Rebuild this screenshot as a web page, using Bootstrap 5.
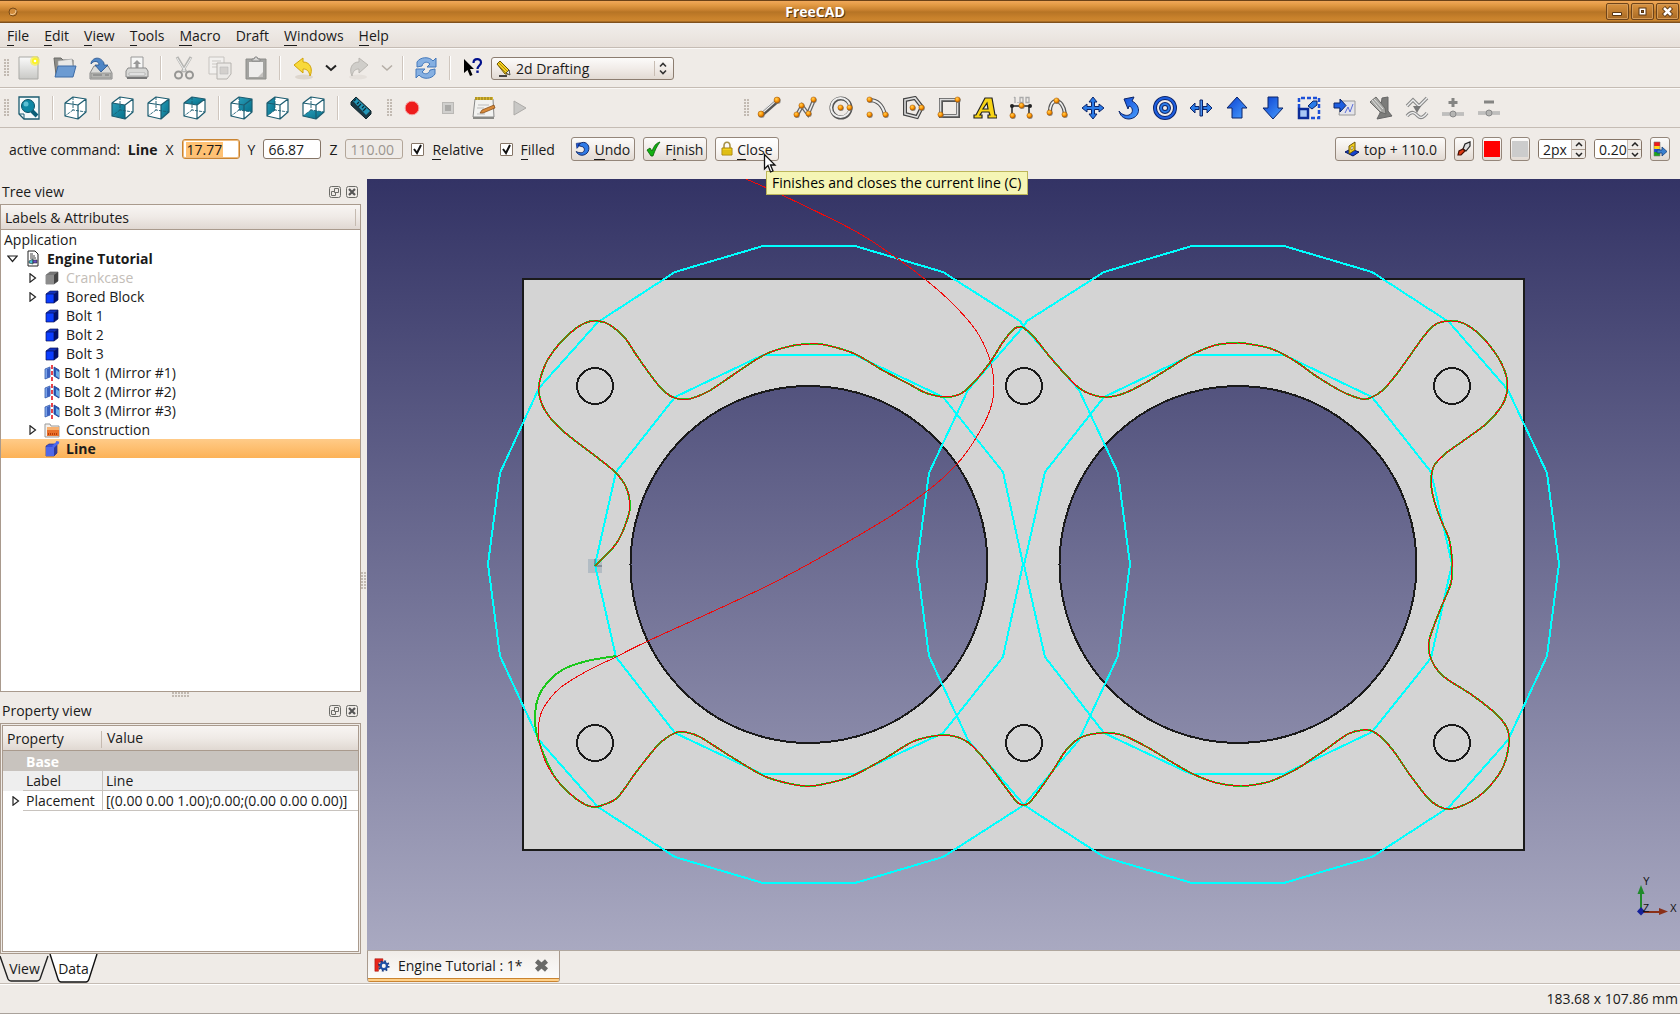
<!DOCTYPE html>
<html lang="en">
<head>
<meta charset="utf-8">
<meta name="viewport" content="width=device-width, initial-scale=1">
<title>FreeCAD</title>
<link rel="stylesheet" href="https://cdn.jsdelivr.net/npm/bootstrap@5.3.0/dist/css/bootstrap.min.css">
<style>
:root{--face:#efebe7;--edge:#a99a8d;--line:#c5bcb4;--sel:#ffc173}
body{font-family:"Open Sans","Noto Sans",sans-serif;font-size:14px;line-height:19px;color:#1a1a1a;background:var(--face);overflow:hidden}
button,input,select{font:inherit;color:inherit}
svg{display:block;flex:none}
a{color:inherit;text-decoration:none}
u{text-decoration:none;border-bottom:1px solid currentColor}
.titlebar{height:23px;background:linear-gradient(#6b4217 0,#6b4217 1px,#f0a85a 1px,#e39a43 5px,#c8812f 10px,#b67425 12px,#c9822c 18px,#cc8630 21px,#80511c 22px);color:#fff;font-weight:700;text-shadow:1px 1px 0 #5a3510}
.wm-left{width:72px}
.wm-btns{gap:2px;padding-right:1px}
.wm-btn{width:23px;height:17px;border:1px solid #6e441a;border-radius:2px;background:linear-gradient(#d9923f,#a86a24);padding:0;box-shadow:inset 0 0 0 1px #d59b57}
.menubar{height:25px;background:linear-gradient(#f1eeeb,#e7e0da);border-bottom:1px solid var(--line);gap:15px;padding:0 7px}
.toolrow{height:40px;border-bottom:1px solid var(--line);border-top:1px solid #faf8f6}
.tool{width:36px;height:36px;border:0;background:none;padding:0;display:flex;align-items:center;justify-content:center}
.tool-drop{width:20px}
.tsep{width:11px;display:flex;justify-content:center}
.tsep::before{content:"";width:2px;height:24px;background:#cfc6be;border-right:1px solid #fff}
.handle{width:5px;height:18px;margin-right:2px;background:radial-gradient(circle at 1px 1px,#c2bab2 0 1px,transparent 1px) 0 0/3px 3px}
.tools-left{flex:0 0 744px}
.taskrow{height:51px;padding:9px 10px 18px 9px}
.gbtn{height:24px;border:1px solid #94867a;border-radius:3px;background:linear-gradient(#fcfbfa,#f1ece8 50%,#e2dad3);padding:0;display:flex;align-items:center;justify-content:center}
.gbtn-hot{background:linear-gradient(#fff,#faf8f6 50%,#efe9e4)}
.gbtn-w{width:64px;gap:4px}
.gbtn-sq{width:20px}
.swatch{width:16px;height:16px}
.swatch-line{background:#f00}
.swatch-face{background:#ccc}
.entry{height:20px;border:1px solid #857567;border-radius:3px;background:#fff;padding:0 4px;min-width:0;outline:0}
.entry-num{width:58px}
.entry-hot{border:1px solid #c98432;box-shadow:inset 0 0 0 1px #eebb7e;background:linear-gradient(var(--sel),var(--sel)) 3px 2px/37px 16px no-repeat,#fff}
.entry:disabled{background:var(--face);color:#9b958f;border-color:#b3a699}
.tick{appearance:none;width:13px;height:13px;border:1px solid #857567;border-radius:1px;background:#fff url("data:image/svg+xml,%3Csvg xmlns='http://www.w3.org/2000/svg' viewBox='0 0 11 11'%3E%3Cpath d='M2 5l3 4 4-8' fill='none' stroke='%23111' stroke-width='2'/%3E%3C/svg%3E") center/11px no-repeat;margin:0;flex:none}
.spin{width:48px;height:20px;border:1px solid #857567;border-radius:3px;background:#fff;overflow:hidden}
.spin input{width:32px;border:0;padding:0 0 0 4px;background:#fff;min-width:0;outline:0}
.spin-arrows{width:14px;background:var(--face);border-left:1px solid #c7bcb2}
.spin-arrows button{height:9px;border:0;background:none;padding:0;display:flex;align-items:center;justify-content:center}
.spin-arrows button+button{border-top:1px solid #a99a8d}
.wb{position:relative;width:183px}
.wb select{appearance:none;width:100%;height:23px;border:1px solid #8c7d70;border-radius:3px;background:linear-gradient(#fcfbfa,#f1ece8 50%,#e2dad3);padding:0 20px 0 24px}
.wb-pic{position:absolute;left:5px;top:3px;pointer-events:none}
.wb-arr{position:absolute;right:0;top:4px;pointer-events:none}
.tip{position:absolute;left:766px;top:171px;height:24px;line-height:21px;padding:0 5px;background:#f5f5b5;border:1px solid #bdb65a;z-index:5;white-space:nowrap;color:#000}
.pointer{position:absolute;left:763px;top:153px;z-index:6}
.workarea,.tree-box{min-height:0}
.dock{flex:0 0 361px}
.dock-title{height:25px;padding:0 3px 0 2px;gap:5px}
.dock-title button{width:12px;height:12px;border:0;padding:0;background:none}
.head-bar{background:linear-gradient(#f8f5f3,#efeae6 50%,#e0d8d2);border-bottom:1px solid var(--edge)}
.tree-box{border:1px solid var(--edge);background:#fff}
.tree-head{height:25px;padding:0 4px}
.tree-head::after,.vbar{content:"";width:1px;height:17px;background:#c5bab0}
.tree-row{height:19px;padding-left:3px;white-space:nowrap}
.lv1{padding-left:6px}
.lv2{padding-left:27px}
.row-off{color:#c3bdb7}
.exp{width:10px;height:12px;border:0;padding:0;background:none;display:flex;align-items:center;justify-content:center}
.lv1 svg.ico{margin:0 6px 0 8px}
.lv2 .exp{width:9px;margin-right:7px}
.lv2 svg.ico{width:16px;margin-right:6px}
.lv2.mir svg.ico{margin-right:4px}
.row-sel{background:linear-gradient(#ffcb88,#fcb257)}
.split-h{height:6px;display:flex;justify-content:center;align-items:center}
.split-h i{width:18px;height:6px;background:radial-gradient(circle at 1px 1px,#c2bab2 0 1px,transparent 1px) 0 0/3px 3px}
.split-v{flex:0 0 6px;display:flex;align-items:center}
.split-v i{width:6px;height:18px;background:radial-gradient(circle at 1px 1px,#c2bab2 0 1px,transparent 1px) 0 0/3px 3px}
.prop-box{height:231px;border:1px solid var(--edge);padding:1px}
.prop-in{border:1px solid var(--edge);background:#fff}
.prop-tbl{width:100%;table-layout:fixed;border-collapse:separate;border-spacing:0}
.prop-tbl .w-exp{width:20px}
.prop-tbl .w-name{width:79px}
.prop-tbl th,.prop-tbl td{padding:0 3px;height:20px;white-space:nowrap;font-weight:400}
.prop-tbl thead th{height:25px;padding:0 4px;background:linear-gradient(#f8f5f3,#efeae6 50%,#e0d8d2);border-bottom:1px solid var(--edge)}
.prop-tbl .vbar{display:inline-block;vertical-align:middle;margin:0 5px 0 -5px}
.prop-tbl .grp{background:#c8c3be;color:#fff;font-weight:700}
.prop-tbl tbody .c2,.prop-tbl tbody .c1{border-bottom:1px solid #c8c3be}
.prop-tbl tbody .c2{border-left:1px solid #c8c3be}
.lab-row td,.lab-row th{background:#eee}
.dock-tabs{height:29px}
.dtab{position:relative;width:49px;height:29px;border:0;background:none;padding:0;display:flex;align-items:center;justify-content:center}
.dtab svg{position:absolute;left:0;top:0;z-index:0}
.dtab span{position:relative;z-index:1}
.viewcol{min-width:0}
.view3d{min-width:0;min-height:0;background:linear-gradient(#333365,#a9a9c1)}
.view3d svg{width:100%;height:100%}
.doctabs{height:33px;border-top:1px solid #b0a79e}
.doctab{width:193px;height:31px;border:1px solid var(--edge);border-top:0;border-bottom:0;border-radius:0 0 3px 3px;background:linear-gradient(#f0ece8,#fcfbfa 27px,#c98432 27px,#c98432 28px,#ffd088 28px,#ffd088 30px,#c98432 30px);padding:0 6px 3px 6px}
.statusbar{height:31px;border-top:1px solid var(--line);border-bottom:1px solid #a9a29b;box-shadow:inset 0 1px 0 #fff;padding-right:2px}
</style>
<script src="https://cdn.jsdelivr.net/npm/bootstrap@5.3.0/dist/js/bootstrap.bundle.min.js"></script>
</head>
<body class="vh-100 d-flex flex-column position-relative">
<svg width="0" height="0" class="position-absolute" aria-hidden="true">
  <defs>
    <radialGradient id="gOrb" cx=".4" cy=".35" r=".7"><stop offset="0" stop-color="#ffd35a"/><stop offset=".5" stop-color="#ff9a0a"/><stop offset="1" stop-color="#b35c00"/></radialGradient>
    <linearGradient id="gBlue" x1="0" y1="0" x2="1" y2="1"><stop offset="0" stop-color="#0a3fd0"/><stop offset="1" stop-color="#4aa0ff"/></linearGradient>
    <linearGradient id="gTeal" x1="0" y1="0" x2="1" y2="1"><stop offset="0" stop-color="#2a9cb8"/><stop offset="1" stop-color="#04708a"/></linearGradient>
    <linearGradient id="gGrey" x1="0" y1="0" x2="0" y2="1"><stop offset="0" stop-color="#fafafa"/><stop offset="1" stop-color="#c9c9c6"/></linearGradient>
    <symbol id="orb" viewBox="0 0 8 8"><circle cx="4.6" cy="4.8" r="3.2" fill="#777" opacity=".7"/><circle cx="4" cy="4" r="3" fill="url(#gOrb)" stroke="#9c5a0c" stroke-width=".5"/></symbol>
    <symbol id="wire" viewBox="0 0 24 24"><path d="M1 7l13 2v14L1 20zM1 7l8-6 13 2-8 6M22 3v13l-8 7" fill="none" stroke="#1c5c70" stroke-width="1.2" stroke-linejoin="round"/><path d="M9 1v13l13 2M9 14l-8 6" fill="none" stroke="#1c5c70" stroke-width=".9" stroke-dasharray="3 1"/></symbol>
    <symbol id="box" viewBox="0 0 16 16"><path d="M2 5h8v9H2z" fill="#0b3dff"/><path d="M2 5l4-3h8l-4 3z" fill="#1030c0"/><path d="M10 5l4-3v9l-4 3z" fill="#001070"/><path d="M2 5h8v9H2zM2 5l4-3h8v9l-4 3M10 5l4-3" fill="none" stroke="#06105a" stroke-width=".7"/></symbol>
    <symbol id="mirror" viewBox="0 0 16 16"><path d="M1 4l5-2v10l-5 2z" fill="#7ba3e8" stroke="#3458a8" stroke-width=".8"/><path d="M3 4l3-1v9l-3 1z" fill="#3c62c0"/><path d="M10 2l5 3v9l-5-3z" fill="#2a58b8" stroke="#1c3f90" stroke-width=".8"/><path d="M12 5l3 2v6l-3-2z" fill="#6fb0e8"/><path d="M8 0v4M8 6v4M8 12v4" stroke="#e8434a" stroke-width="2"/></symbol>
    <symbol id="floatw" viewBox="0 0 12 12"><rect x=".5" y=".5" width="11" height="11" rx="2" fill="none" stroke="#6c6c68"/><path d="M5.500 2.500h4v4h-4zM5 5.500H2.500v4h4V7" fill="none" stroke="#6c6c68"/></symbol>
    <symbol id="closew" viewBox="0 0 12 12"><rect x=".5" y=".5" width="11" height="11" rx="2" fill="none" stroke="#6c6c68"/><path d="M3 3l6 6M9 3l-6 6" stroke="#555" stroke-width="2.200"/></symbol>
    <symbol id="closed" viewBox="0 0 8 10"><path d="M1 .8l5.500 4.200L1 9.200z" fill="#fff" stroke="#222" stroke-width="1.200"/></symbol>
  </defs>
</svg>

<header class="titlebar d-flex align-items-center">
  <div class="wm-left ps-2"><svg width="10" height="10" viewBox="0 0 10 10"><circle cx="5" cy="5" r="4" fill="#d08a3a" stroke="#7a4b18"/><path d="M2 7a4 4 0 0 0 6-4" fill="none" stroke="#f3cf9e"/></svg></div>
  <div class="flex-fill text-center pe-5">FreeCAD</div>
  <div class="wm-btns d-flex">
    <button class="wm-btn" aria-label="Minimize"><svg width="21" height="15" viewBox="0 0 21 15"><path d="M5.500 8.500h9v3h-9z" fill="#fff" stroke="#5a3510"/></svg></button>
    <button class="wm-btn" aria-label="Maximize"><svg width="21" height="15" viewBox="0 0 21 15"><rect x="7" y="4" width="7" height="7" fill="#fff" stroke="#5a3510"/><rect x="9.500" y="6.500" width="2" height="2" fill="#8a5a20" stroke="#5a3510"/></svg></button>
    <button class="wm-btn" aria-label="Close window"><svg width="21" height="15" viewBox="0 0 21 15"><path d="M6.500 3.500l8 8M14.500 3.500l-8 8" stroke="#5a3510" stroke-width="4.500"/><path d="M7 4l7 7M14 4l-7 7" stroke="#fff" stroke-width="2.500"/></svg></button>
  </div>
</header>

<nav class="menubar d-flex align-items-center">
  <a href="#"><u>F</u>ile</a><a href="#"><u>E</u>dit</a><a href="#"><u>V</u>iew</a><a href="#"><u>T</u>ools</a><a href="#"><u>M</u>acro</a><a href="#">Draft</a><a href="#"><u>W</u>indows</a><a href="#"><u>H</u>elp</a>
</nav>

<div class="toolrow d-flex align-items-center">
  <div class="handle ms-1"></div>
  <button class="tool" aria-label="New"><svg width="24" height="24" viewBox="0 0 24 24"><path d="M2 1h19v22H2z" fill="url(#gGrey)" stroke="#a9a9a5"/><circle cx="18" cy="5" r="5" fill="#f6ee3c" opacity=".6"/><circle cx="18" cy="5" r="3" fill="#fdf41c"/><circle cx="18" cy="5" r="1.300" fill="#fff"/></svg></button>
  <button class="tool" aria-label="Open"><svg width="24" height="24" viewBox="0 0 24 24"><path d="M1 2h7l2 2h10v15H3z" fill="#8c8c88" stroke="#6a6a66"/><path d="M5 5l14-2 1 8H5z" fill="#e8e8e6" stroke="#aaa" stroke-width=".6"/><path d="M5 10h18l-3 11H2z" fill="#6c9bd2" stroke="#3e6ca6"/></svg></button>
  <button class="tool" aria-label="Save"><svg width="24" height="24" viewBox="0 0 24 24"><path d="M5 10h14l4 7v6H1v-6z" fill="#dcdcda" stroke="#888"/><path d="M2 17h20v5H2z" fill="#b5b5b2" stroke="#8a8a86" stroke-width=".7"/><path d="M4 19h9M16 19h4" stroke="#777"/><path d="M2 8c0-6 9-9 13-1v2h4l-7 7-6-7h4c0-4-5-5-8-1z" fill="#4f86c6" stroke="#24508c" stroke-width=".8"/></svg></button>
  <button class="tool" aria-label="Print"><svg width="24" height="24" viewBox="0 0 24 24"><path d="M6 1h12v13H6z" fill="#f6f6f5" stroke="#999"/><path d="M12 4l4 4h-2.500v4h-3V8H8z" fill="#999"/><path d="M3 12h18l2 3v6H1v-6z" fill="#d8d8d6" stroke="#888"/><path d="M4 17h16v2H4z" fill="#fff" stroke="#999" stroke-width=".6"/><path d="M2 22h20" stroke="#777" stroke-width="2"/></svg></button>
  <div class="tsep"></div>
  <button class="tool" aria-label="Cut"><svg width="24" height="24" viewBox="0 0 24 24"><path d="M5 1l9 15M19 1l-9 15" stroke="#b5b5b2" stroke-width="3"/><path d="M5 2l8 13M19 2l-8 13" stroke="#eee"/><circle cx="6.500" cy="19" r="3.500" fill="none" stroke="#969694" stroke-width="2"/><circle cx="17.500" cy="19" r="3.500" fill="none" stroke="#969694" stroke-width="2"/></svg></button>
  <button class="tool" aria-label="Copy"><svg width="24" height="24" viewBox="0 0 24 24"><path d="M1 1h15v17H1z" fill="#f2f0ee" stroke="#c6c3bf"/><path d="M4 5h9M4 8h9M4 11h5" stroke="#cbc8c4"/><path d="M9 7h14v11l-4 5H9z" fill="#ebe9e6" stroke="#b5b2ae"/><path d="M12 11h8v7h-8z" fill="#d3d0cd" stroke="#bbb" stroke-width=".6"/></svg></button>
  <button class="tool" aria-label="Paste"><svg width="24" height="24" viewBox="0 0 24 24"><path d="M2 3h20v20H2z" fill="#a3a3a0" stroke="#8e8e8a"/><path d="M5 6h14v15H5z" fill="#eeedec"/><path d="M19 21l-5 0 5-5z" fill="#c3c1be"/><path d="M8 5V3h2l1-2h2l1 2h2v2z" fill="#d8d7d5" stroke="#888"/></svg></button>
  <div class="tsep"></div>
  <button class="tool" aria-label="Undo"><svg width="24" height="24" viewBox="0 0 24 24"><ellipse cx="13" cy="21" rx="9" ry="2.500" fill="#ddd6ce"/><path d="M3 9l9-7v4c8 0 10 8 7 14-1-5-3-7-7-7v4z" fill="#f8d93a" stroke="#d2a40a" stroke-linejoin="round"/></svg></button>
  <button class="tool tool-drop" aria-label="Undo list"><svg width="12" height="8" viewBox="0 0 12 8"><path d="M1 1.500l5 4.500 5-4.500" fill="none" stroke="#222" stroke-width="2"/></svg></button>
  <button class="tool" aria-label="Redo"><svg width="24" height="24" viewBox="0 0 24 24"><ellipse cx="11" cy="21" rx="9" ry="2.500" fill="#e5e0db"/><path d="M21 9l-9-7v4c-8 0-10 8-7 14 1-5 3-7 7-7v4z" fill="#d0ceca" stroke="#b9b6b1" stroke-linejoin="round"/></svg></button>
  <button class="tool tool-drop" aria-label="Redo list"><svg width="12" height="8" viewBox="0 0 12 8"><path d="M1 1.500l5 4.500 5-4.500" fill="none" stroke="#b5aea6" stroke-width="1.600"/></svg></button>
  <div class="tsep"></div>
  <button class="tool" aria-label="Refresh"><svg width="24" height="24" viewBox="0 0 24 24"><path d="M3 11V6c3-5 12-6 16-1l3-3v9h-9l3-3c-3-3-7-2-8 2z" fill="#86b0e2" stroke="#4479bb"/><path d="M21 13v5c-3 5-12 6-16 1l-3 3v-9h9l-3 3c3 3 7 2 8-2z" fill="#86b0e2" stroke="#4479bb"/></svg></button>
  <div class="tsep"></div>
  <button class="tool" aria-label="What's this?"><svg width="20" height="20" viewBox="0 0 20 20"><path d="M1 1v14l3.500-3 2.500 6 2.500-1L7 11h4z" fill="#000"/><path d="M10.500 5c0-5 7.500-5 7.500-.5 0 3-3.500 3-3.500 6.500" fill="none" stroke="#00108c" stroke-width="2.200"/><path d="M13.300 12.500h2.400v2.400h-2.400z" fill="#00108c"/></svg></button>
  <div class="wb">
    <select aria-label="Workbench"><option>2d Drafting</option></select>
    <svg class="wb-pic" width="16" height="17" viewBox="0 0 16 17"><path d="M1 4l3-3 9 9v4h-4z" fill="#f5d020" stroke="#6b5405"/><path d="M3 3l9 9M2 5l9 9" stroke="#8a6c08" stroke-width=".7"/><path d="M10 13l3-3 1 5z" fill="#eee" stroke="#222" stroke-width=".7"/><path d="M3 16h8" stroke="#111" stroke-width="1.500"/></svg>
    <svg class="wb-arr" width="22" height="15" viewBox="0 0 22 15"><path d="M2.500 0v15" stroke="#c8bdb3"/><path d="M8 5.500L11 2.500l3 3M8 9.500l3 3 3-3" fill="none" stroke="#333" stroke-width="1.600"/></svg>
  </div>
</div>

<div class="toolrow d-flex align-items-center">
  <div class="tools-left d-flex align-items-center">
  <div class="handle ms-1"></div>
  <button class="tool" aria-label="Fit all"><svg width="24" height="24" viewBox="0 0 24 24"><path d="M2 1h20v22H7l-5-5z" fill="#f4fafb" stroke="#1c5c70" stroke-width="1.300"/><path d="M2 18h5v5" fill="none" stroke="#1c5c70"/><circle cx="11" cy="10" r="6.500" fill="#0e88a4" stroke="#0a4f63"/><circle cx="9" cy="8" r="2.500" fill="#5cc0d4"/><path d="M15 15l5 5" stroke="#0a5f78" stroke-width="4"/></svg></button>
  <div class="tsep"></div>
  <button class="tool" aria-label="Axonometric"><svg width="24" height="24" viewBox="0 0 24 24"><path d="M1 7l8-6 13 2v13l-8 7-13-3z" fill="#fff"/><use href="#wire"/></svg></button>
  <div class="tsep"></div>
  <button class="tool" aria-label="Front"><svg width="24" height="24" viewBox="0 0 24 24"><path d="M1 7l8-6 13 2v13l-8 7-13-3z" fill="#fff"/><path d="M1 7l13 2v14L1 20z" fill="url(#gTeal)"/><use href="#wire"/></svg></button>
  <button class="tool" aria-label="Right"><svg width="24" height="24" viewBox="0 0 24 24"><path d="M1 7l8-6 13 2v13l-8 7-13-3z" fill="#fff"/><path d="M14 9l8-6v13l-8 7z" fill="url(#gTeal)"/><use href="#wire"/></svg></button>
  <button class="tool" aria-label="Top"><svg width="24" height="24" viewBox="0 0 24 24"><path d="M1 7l8-6 13 2v13l-8 7-13-3z" fill="#fff"/><path d="M1 7l8-6 13 2-8 6z" fill="url(#gTeal)"/><use href="#wire"/></svg></button>
  <div class="tsep"></div>
  <button class="tool" aria-label="Rear"><svg width="24" height="24" viewBox="0 0 24 24"><path d="M1 7l8-6 13 2v13l-8 7-13-3z" fill="#fff"/><path d="M9 1l13 2v13L9 14z" fill="url(#gTeal)"/><use href="#wire"/></svg></button>
  <button class="tool" aria-label="Left"><svg width="24" height="24" viewBox="0 0 24 24"><path d="M1 7l8-6 13 2v13l-8 7-13-3z" fill="#fff"/><path d="M1 7l8-6v13l-8 6z" fill="url(#gTeal)"/><use href="#wire"/></svg></button>
  <button class="tool" aria-label="Bottom"><svg width="24" height="24" viewBox="0 0 24 24"><path d="M1 7l8-6 13 2v13l-8 7-13-3z" fill="#fff"/><path d="M1 20l8-6 13 2-8 7z" fill="url(#gTeal)"/><use href="#wire"/></svg></button>
  <div class="tsep"></div>
  <button class="tool" aria-label="Measure"><svg width="24" height="24" viewBox="0 0 24 24"><path d="M2 6l5-5 15 14v3l-5 5-2-2L2 9z" fill="#1a3844" stroke="#11262e"/><path d="M4 5l3-3 14 13-4 4z" fill="#2497b8"/><path d="M7 3l-2 2M10 6L8 8M12 8l-3 3M15 10l-2 2M17 12l-3 3" stroke="#0a2a36" stroke-width="1.200"/></svg></button>
  <div class="handle ms-2"></div>
  <button class="tool" aria-label="Record macro"><svg width="16" height="16" viewBox="0 0 16 16"><circle cx="8" cy="8" r="6.800" fill="#ee1c1c" stroke="#f59a9a"/></svg></button>
  <button class="tool" aria-label="Stop macro"><svg width="12" height="12" viewBox="0 0 12 12"><rect x=".5" y=".5" width="11" height="11" fill="#d0cfcd" stroke="#bab8b5"/><rect x="3" y="3" width="6" height="6" fill="#aaa9a7"/></svg></button>
  <button class="tool" aria-label="Macros"><svg width="24" height="24" viewBox="0 0 24 24"><path d="M3 3h18l1 18H1z" fill="#f2f2f0" stroke="#888"/><path d="M1 21h21v2H1z" fill="#8a8a86"/><path d="M3 1h18v3H3z" fill="#d8b832"/><path d="M4 1v3M7 1v3M10 1v3M13 1v3M16 1v3M19 1v3" stroke="#8b741a"/><path d="M6 9h11M5 12h7M5 18h8" stroke="#bbb"/><path d="M8 17l2-3 12-5 1 3-12 5z" fill="#d88a3a" stroke="#7b4310" stroke-width=".7"/></svg></button>
  <button class="tool" aria-label="Run macro"><svg width="14" height="16" viewBox="0 0 14 16"><path d="M1 1l12 7-12 7z" fill="#c9c8c6" stroke="#adaba8"/></svg></button>
  </div>
  <div class="handle"></div>
  <button class="tool" aria-label="Line"><svg width="24" height="24" viewBox="0 0 24 24"><path d="M4 19L21 4" stroke="#555" stroke-width="5"/><path d="M3 18L20 3" stroke="#eee" stroke-width="3"/><path d="M3 18L20 3" stroke="#888"/><use href="#orb" x="0" y="14" width="8" height="8"/><use href="#orb" x="16" y="0" width="8" height="8"/></svg></button>
  <button class="tool" aria-label="Wire"><svg width="24" height="24" viewBox="0 0 24 24"><path d="M4 19l5-9 6 8 6-14" fill="none" stroke="#666" stroke-width="4"/><path d="M4 19l5-9 6 8 6-14" fill="none" stroke="#eee" stroke-width="1.500"/><use href="#orb" x="0" y="15" width="7" height="7"/><use href="#orb" x="5" y="6" width="7" height="7"/><use href="#orb" x="12" y="14" width="7" height="7"/><use href="#orb" x="17" y="0" width="7" height="7"/></svg></button>
  <button class="tool" aria-label="Circle"><svg width="24" height="24" viewBox="0 0 24 24"><circle cx="12" cy="12" r="9.500" fill="none" stroke="#555" stroke-width="4"/><circle cx="11.500" cy="11.500" r="9.500" fill="none" stroke="#eee" stroke-width="2"/><use href="#orb" x="8" y="8" width="7" height="7"/><use href="#orb" x="17" y="8" width="7" height="7"/></svg></button>
  <button class="tool" aria-label="Arc"><svg width="24" height="24" viewBox="0 0 24 24"><path d="M4 4c9 0 14 6 16 15" fill="none" stroke="#555" stroke-width="4"/><path d="M4 4c9 0 14 6 16 15" fill="none" stroke="#eee" stroke-width="2"/><use href="#orb" x="1" y="0" width="7" height="7"/><use href="#orb" x="1" y="15" width="7" height="7"/><use href="#orb" x="17" y="15" width="7" height="7"/></svg></button>
  <button class="tool" aria-label="Polygon"><svg width="24" height="24" viewBox="0 0 24 24"><path d="M4 4l10-2 7 9-5 10-12-3z" fill="none" stroke="#444" stroke-width="4"/><path d="M4 4l10-2 7 9-5 10-12-3z" fill="none" stroke="#ddd" stroke-width="1.600"/><use href="#orb" x="8" y="8" width="7" height="7"/><use href="#orb" x="17" y="8" width="7" height="7"/></svg></button>
  <button class="tool" aria-label="Rectangle"><svg width="24" height="24" viewBox="0 0 24 24"><path d="M4 4h17v16H4z" fill="none" stroke="#555" stroke-width="4"/><path d="M3.500 3.500h17v16h-17z" fill="none" stroke="#ddd" stroke-width="1.600"/><use href="#orb" x="0" y="15" width="7" height="7"/><use href="#orb" x="17" y="0" width="7" height="7"/></svg></button>
  <button class="tool" aria-label="Text"><svg width="24" height="24" viewBox="0 0 24 24"><path d="M12 2h7l3 17h2v3h-9v-3h2l-1-3H9l-2 3h2v3H1v-3h2zM14 7l-4 6h5z" fill="#f8d416" stroke="#222" stroke-width="1.200" fill-rule="evenodd"/></svg></button>
  <button class="tool" aria-label="Dimension"><svg width="24" height="24" viewBox="0 0 24 24"><path d="M6 1v6M5 2l1-1M9 6v1M11 1.500h3v5h-3zM17 1.500h3v5h-3z" fill="none" stroke="#aaa" stroke-width="1.300"/><path d="M3 10h18M3 10v10M20 10v10" fill="none" stroke="#555" stroke-width="2"/><circle cx="3" cy="10" r="2" fill="#222"/><circle cx="21" cy="10" r="2" fill="#222"/><use href="#orb" x="9" y="6" width="7" height="7"/><use href="#orb" x="0" y="16" width="7" height="7"/><use href="#orb" x="17" y="16" width="7" height="7"/></svg></button>
  <button class="tool" aria-label="BSpline"><svg width="24" height="24" viewBox="0 0 24 24"><path d="M5 17C4 1 18 1 20 18" fill="none" stroke="#555" stroke-width="4"/><path d="M5 17C4 1 18 1 20 18" fill="none" stroke="#eee" stroke-width="1.600"/><use href="#orb" x="1" y="13" width="7" height="7"/><use href="#orb" x="8" y="1" width="7" height="7"/><use href="#orb" x="16" y="15" width="7" height="7"/></svg></button>
  <button class="tool" aria-label="Move"><svg width="24" height="24" viewBox="0 0 24 24"><path d="M12 1l4 5h-2.500v4.500H18V8l5 4-5 4v-2.500h-4.500V18H16l-4 5-4-5h2.500v-4.500H6V16l-5-4 5-4v2.500h4.500V6H8z" fill="#2a7be8" stroke="#0c2468"/></svg></button>
  <button class="tool" aria-label="Rotate"><svg width="24" height="24" viewBox="0 0 24 24"><path d="M7 3l10-2-2 4c10 5 8 17-3 18-6 0-9-4-10-8 3 4 7 5 10 4 5-2 4-8 0-9l-1 3z" fill="url(#gBlue)" stroke="#0c2468" stroke-linejoin="round"/></svg></button>
  <button class="tool" aria-label="Offset"><svg width="24" height="24" viewBox="0 0 24 24"><circle cx="12" cy="12" r="10" fill="none" stroke="#0c2468" stroke-width="4"/><circle cx="12" cy="12" r="10" fill="none" stroke="#1f5fe0" stroke-width="2"/><circle cx="12" cy="12" r="4" fill="none" stroke="#0c2468" stroke-width="4"/><circle cx="12" cy="12" r="4" fill="none" stroke="#2a7be8" stroke-width="2"/></svg></button>
  <button class="tool" aria-label="Trim"><svg width="24" height="24" viewBox="0 0 24 24"><path d="M1 12l5-5v3.500h4v3H6V17zM23 12l-5-5v3.500h-4v3h4V17z" fill="#2a7be8" stroke="#0c2468"/><path d="M11 4h2.500v16H11z" fill="#4a90f0" stroke="#0c2468"/></svg></button>
  <button class="tool" aria-label="Upgrade"><svg width="24" height="24" viewBox="0 0 24 24"><path d="M12 1l10 11h-5v10H7V12H2z" fill="url(#gBlue)" stroke="#0c2468"/></svg></button>
  <button class="tool" aria-label="Downgrade"><svg width="24" height="24" viewBox="0 0 24 24"><path d="M12 23L2 12h5V1h10v11h5z" fill="url(#gBlue)" stroke="#0c2468"/></svg></button>
  <button class="tool" aria-label="Scale"><svg width="24" height="24" viewBox="0 0 24 24"><path d="M2 12V2h20v20H12" fill="none" stroke="#1c50d8" stroke-width="2.500" stroke-dasharray="4 2"/><path d="M2 13h9v9H2z" fill="#a9c6f5" stroke="#0c2c98" stroke-width="2.500"/><path d="M11 10l5-5h4v4l-5 4z" fill="#2a7be8" stroke="#0c2468"/></svg></button>
  <button class="tool" aria-label="Put on sheet"><svg width="24" height="24" viewBox="0 0 24 24"><path d="M8 5h14v14H6z" fill="#e4e4ea" stroke="#999"/><path d="M12 17l3-6 2 5 3-8" fill="none" stroke="#5a6cd8"/><path d="M1 7h6V3l6 6.500L7 16v-4H1z" fill="#1f5fe0" stroke="#0c2468"/></svg></button>
  <button class="tool" aria-label="Edit"><svg width="24" height="24" viewBox="0 0 24 24"><path d="M13 2l6-1v14l4 5-15 3 3-6z" fill="#7c7c7a" stroke="#666"/><path d="M1 6l6-5 9 11 1 6-6-2z" fill="#a4a4a1" stroke="#6a6a68"/><path d="M3 4l9 11M5 3l9 10" stroke="#e0e0de"/></svg></button>
  <button class="tool" aria-label="Wire to BSpline"><svg width="24" height="24" viewBox="0 0 24 24"><path d="M2 10l6-6 6 6 8-8M2 20c5-6 8-3 11 0s6 1 9-3" fill="none" stroke="#888" stroke-width="3.500"/><path d="M2 10l6-6 6 6 8-8M2 20c5-6 8-3 11 0s6 1 9-3" fill="none" stroke="#eee" stroke-width="1.300"/><path d="M8 10h8l-4 7z" fill="#777"/></svg></button>
  <button class="tool" aria-label="Add point"><svg width="24" height="24" viewBox="0 0 24 24"><path d="M12 2v9M7.500 6.500h9" stroke="#858583" stroke-width="3"/><path d="M1 18h22" stroke="#999" stroke-width="3"/><path d="M1 18h22" stroke="#e4e4e2"/><circle cx="12" cy="18" r="3" fill="#b5b5b3" stroke="#888"/></svg></button>
  <button class="tool" aria-label="Remove point"><svg width="24" height="24" viewBox="0 0 24 24"><path d="M7 6h10" stroke="#858583" stroke-width="3"/><path d="M1 17h22" stroke="#999" stroke-width="3"/><path d="M1 17h22" stroke="#e4e4e2"/><circle cx="12" cy="17" r="3" fill="#b5b5b3" stroke="#888"/></svg></button>
</div>

<div class="taskrow d-flex align-items-center">
  <div class="d-flex align-items-center gap-2">
    <span>active command: <b class="ms-1">Line</b></span>
    <label for="fx">X</label><input id="fx" class="entry entry-num entry-hot" value="17.77">
    <label for="fy">Y</label><input id="fy" class="entry entry-num" value="66.87">
    <label for="fz">Z</label><input id="fz" class="entry entry-num" value="110.00" disabled>
  </div>
  <div class="d-flex align-items-center gap-2 ms-2"><input type="checkbox" class="tick" id="rel" checked><label for="rel"><u>R</u>elative</label></div>
  <div class="d-flex align-items-center gap-2 ms-3"><input type="checkbox" class="tick" id="fil" checked><label for="fil"><u>F</u>illed</label></div>
  <div class="d-flex gap-2 ms-3">
    <button class="gbtn gbtn-w"><svg width="15" height="16" viewBox="0 0 24 24"><path d="M9 2l-7 1 1 8 3-3z" fill="#1c55d8" stroke="#0c2468"/><path d="M5 6l5-4c9-3 15 6 11 14-4 8-16 8-19 0 5 3 13 3 13-3 0-4-3-5-5-5z" fill="#2f7ae6" stroke="#0c2468" stroke-width="1.500"/></svg><span><u>U</u>ndo</span></button>
    <button class="gbtn gbtn-w"><svg width="15" height="16" viewBox="0 0 15 16"><path d="M1 9l3-2 2 3c2-5 4-8 8-9-3 4-5 8-7 14H5z" fill="#12b012" stroke="#066006" stroke-width=".8"/></svg><span>F<u>i</u>nish</span></button>
    <button class="gbtn gbtn-w gbtn-hot"><svg width="12" height="16" viewBox="0 0 12 16"><path d="M3 8V5c0-5 6-5 6 0v3" fill="none" stroke="#a8924a" stroke-width="1.600"/><path d="M1 7h10v7H1z" fill="#f5d21a" stroke="#a8860a"/><path d="M2 10h8M2 12h8" stroke="#c9a90e"/></svg><span><u>C</u>lose</span></button>
  </div>
  <div class="d-flex align-items-center gap-2 ms-auto">
    <button class="gbtn px-2 gap-1"><svg width="16" height="16" viewBox="0 0 16 16"><path d="M1 11l6-3 8 3-6 4z" fill="#1746d0" stroke="#06145a"/><path d="M5 5l6-4v8l-6 4z" fill="#f7d21e" stroke="#6b5405"/><path d="M7 6l2-1v3L7 9z" fill="#fff" stroke="#6b5405" stroke-width=".6"/></svg>top + 110.0</button>
    <button class="gbtn gbtn-sq" aria-label="Construction mode"><svg width="14" height="16" viewBox="0 0 14 16"><path d="M6 8l2-5 5-2v4L9 10z" fill="#dcdcdc" stroke="#222" stroke-width="1.200"/><path d="M1 14l1-4 4-2 2 2-4 4z" fill="#e03a14" stroke="#4a1004" stroke-width="1.200"/></svg></button>
    <button class="gbtn gbtn-sq" aria-label="Line color"><span class="swatch swatch-line"></span></button>
    <button class="gbtn gbtn-sq" aria-label="Face color"><span class="swatch swatch-face"></span></button>
    <div class="spin d-flex"><input aria-label="Line width" value="2px"><div class="spin-arrows d-flex flex-column"><button aria-label="More"><svg width="8" height="5" viewBox="0 0 8 5"><path d="M1 4l3-3 3 3" fill="none" stroke="#222" stroke-width="1.500"/></svg></button><button aria-label="Less"><svg width="8" height="5" viewBox="0 0 8 5"><path d="M1 1l3 3 3-3" fill="none" stroke="#222" stroke-width="1.500"/></svg></button></div></div>
    <div class="spin d-flex"><input aria-label="Font size" value="0.20"><div class="spin-arrows d-flex flex-column"><button aria-label="More"><svg width="8" height="5" viewBox="0 0 8 5"><path d="M1 4l3-3 3 3" fill="none" stroke="#222" stroke-width="1.500"/></svg></button><button aria-label="Less"><svg width="8" height="5" viewBox="0 0 8 5"><path d="M1 1l3 3 3-3" fill="none" stroke="#222" stroke-width="1.500"/></svg></button></div></div>
    <button class="gbtn gbtn-sq" aria-label="Apply style"><svg width="14" height="16" viewBox="0 0 14 16"><path d="M1 1h6v4H1z" fill="#ee1c1c"/><path d="M1 5h6v3H1z" fill="#ffd21a"/><path d="M1 8h6v3H1z" fill="#1c48e0"/><path d="M1 11h6v4H1z" fill="#1ca61c"/><path d="M1 1h6v14H1z" fill="none" stroke="#777" stroke-width=".6"/><path d="M4 9h5V6l5 4.500L9 15v-3H4z" fill="#3a80d0" stroke="#173f78" stroke-width=".8"/></svg></button>
  </div>
</div>

<main class="workarea flex-fill d-flex">
  <aside class="dock d-flex flex-column">
    <div class="dock-title d-flex align-items-center"><span class="me-auto">Tree view</span><button aria-label="Float"><svg width="12" height="12"><use href="#floatw"/></svg></button><button aria-label="Close"><svg width="12" height="12"><use href="#closew"/></svg></button></div>
    <div class="tree-box flex-fill">
      <div class="tree-head head-bar d-flex align-items-center justify-content-between">Labels &amp; Attributes</div>
      <ul class="list-unstyled m-0">
        <li class="tree-row">Application</li>
        <li class="tree-row lv1 d-flex align-items-center"><button class="exp" aria-label="Collapse"><svg width="11" height="8" viewBox="0 0 11 8"><path d="M.8 1h9.400L5.500 6.500z" fill="#fff" stroke="#222" stroke-width="1.200"/></svg></button><svg class="ico" width="16" height="17" viewBox="0 0 16 17"><path d="M3 1h7l3 3v12H3z" fill="#fff" stroke="#222"/><path d="M5 4h3M5 6h5M5 8h6" stroke="#444"/><path d="M4 11l4-2v5l-4-1z" fill="#4ac3d8" stroke="#222" stroke-width=".6"/><path d="M8 10h4v3H8z" fill="#6a52c8" stroke="#222" stroke-width=".6"/></svg><b>Engine Tutorial</b></li>
        <li class="tree-row lv2 row-off d-flex align-items-center"><button class="exp" aria-label="Expand"><svg width="8" height="10"><use href="#closed"/></svg></button><svg class="ico" width="16" height="16" viewBox="0 0 16 16"><path d="M2 5l4-3h8v9l-4 3H2z" fill="#777" stroke="#666" stroke-width=".7"/><path d="M10 5l4-3v9l-4 3z" fill="#444"/><path d="M2 5h8v9H2z" fill="#8c8c8c"/></svg>Crankcase</li>
        <li class="tree-row lv2 d-flex align-items-center"><button class="exp" aria-label="Expand"><svg width="8" height="10"><use href="#closed"/></svg></button><svg class="ico" width="16" height="16"><use href="#box"/></svg>Bored Block</li>
        <li class="tree-row lv2 d-flex align-items-center"><span class="exp"></span><svg class="ico" width="16" height="16"><use href="#box"/></svg>Bolt 1</li>
        <li class="tree-row lv2 d-flex align-items-center"><span class="exp"></span><svg class="ico" width="16" height="16"><use href="#box"/></svg>Bolt 2</li>
        <li class="tree-row lv2 d-flex align-items-center"><span class="exp"></span><svg class="ico" width="16" height="16"><use href="#box"/></svg>Bolt 3</li>
        <li class="tree-row lv2 mir d-flex align-items-center"><span class="exp"></span><svg class="ico" width="16" height="16"><use href="#mirror"/></svg>Bolt 1 (Mirror #1)</li>
        <li class="tree-row lv2 mir d-flex align-items-center"><span class="exp"></span><svg class="ico" width="16" height="16"><use href="#mirror"/></svg>Bolt 2 (Mirror #2)</li>
        <li class="tree-row lv2 mir d-flex align-items-center"><span class="exp"></span><svg class="ico" width="16" height="16"><use href="#mirror"/></svg>Bolt 3 (Mirror #3)</li>
        <li class="tree-row lv2 d-flex align-items-center"><button class="exp" aria-label="Expand"><svg width="8" height="10"><use href="#closed"/></svg></button><svg class="ico" width="16" height="16" viewBox="0 0 16 16"><path d="M1 2h5l1 2h8v11H1z" fill="#f4f0ec" stroke="#999"/><path d="M3 5h12v9H3z" fill="#e8702a"/><path d="M3 5h12v3H3z" fill="#f7b070"/><path d="M4 12h10" stroke="#b83a08" stroke-width="2" stroke-dasharray="1 1"/></svg>Construction</li>
        <li class="tree-row lv2 row-sel d-flex align-items-center"><span class="exp"></span><svg class="ico" width="16" height="16" viewBox="0 0 16 16"><path d="M2 5l3-2h8v9l-3 3H2z" fill="#3a50d8" stroke="#2a2f80" stroke-width=".7"/><path d="M2 6h8v9H2z" fill="#5068e8"/><path d="M10 6l3-3v9l-3 3z" fill="#303a98"/><path d="M9 6l4-4M12 1l3 1" stroke="#4a68f0" stroke-width="2.500"/></svg><b>Line</b></li>
      </ul>
    </div>
    <div class="split-h"><i></i></div>
    <div class="dock-title d-flex align-items-center"><span class="me-auto">Property view</span><button aria-label="Float"><svg width="12" height="12"><use href="#floatw"/></svg></button><button aria-label="Close"><svg width="12" height="12"><use href="#closew"/></svg></button></div>
    <div class="prop-box"><div class="prop-in h-100">
      <table class="prop-tbl">
        <colgroup><col class="w-exp"><col class="w-name"><col></colgroup>
        <thead><tr><th colspan="2">Property</th><th><span class="vbar"></span>Value</th></tr></thead>
        <tbody>
          <tr><td class="grp"></td><th class="grp" colspan="2">Base</th></tr>
          <tr class="lab-row"><td></td><th class="c1 pe-0">Label</th><td class="c2">Line</td></tr>
          <tr><td class="ps-2 pe-0"><button class="exp" aria-label="Expand"><svg width="8" height="10"><use href="#closed"/></svg></button></td><th class="c1 pe-0">Placement</th><td class="c2 pe-0">[(0.00 0.00 1.00);0.00;(0.00 0.00 0.00)]</td></tr>
        </tbody>
      </table>
    </div></div>
    <div class="dock-tabs d-flex" role="tablist">
      <button class="dtab" role="tab"><svg width="49" height="29" viewBox="0 0 49 29"><path d="M0 2l8 23q1 2 3 2h26q2 0 3-2l8-23" fill="none" stroke="#222" stroke-width="1.400"/></svg><span>View</span></button>
      <button class="dtab" role="tab" aria-selected="true"><svg width="49" height="29" viewBox="0 0 49 29"><path d="M1 0l8 25q1 3 3 3h25q2 0 3-3l8-25" fill="#fff" stroke="#111" stroke-width="1.400"/></svg><span>Data</span></button>
    </div>
  </aside>
  <div class="split-v"><i></i></div>
  <section class="viewcol flex-fill d-flex flex-column">
    <div class="view3d flex-fill">
      <svg viewBox="367 179 1313 771" fill="none" role="img" aria-label="3D view">
        <path fill="#d4d4d4" fill-rule="evenodd" d="M523 279H1524V850H523zM809 386a178.500 178.500 0 1 0 1 0zM1238 386a178.500 178.500 0 1 0 1 0z"/>
        <g stroke="#1a1a1a" stroke-width="2" shape-rendering="crispEdges">
          <path d="M523 279H1524V850H523z"/>
          <circle cx="809" cy="564.500" r="178.500"/><circle cx="1238" cy="564.500" r="178.500"/>
          <circle cx="595" cy="386" r="18"/><circle cx="1024" cy="386" r="18"/><circle cx="1452" cy="386" r="18"/>
          <circle cx="595" cy="743" r="18"/><circle cx="1024" cy="743" r="18"/><circle cx="1452" cy="743" r="18"/>
        </g>
        <rect x="588" y="559" width="14" height="14" fill="#8fa3b4" opacity=".5"/>
        <g stroke="#0ff" stroke-width="2" shape-rendering="crispEdges">
          <path d="M488 564L500 473 539 388 598 322 675 272 763 246H855L943 272 1020 321 1024 327 1079 390 1118 473 1130 564 1118 656 1079 740 1024 805 943 857 855 883H763L675 857 598 807 539 740 500 656z"/>
          <path d="M595 565L616 472 675 397 763 355H855L943 397 1003 472 1023 564 1003 657 943 733 855 774H762L675 733 616 657z"/>
          <path d="M917 564L929 473 968 390 1023 327 1027 321 1104 272 1192 246H1284L1372 272 1449 322 1508 390 1547 473 1559 564 1547 656 1508 740 1449 807 1372 857 1284 883H1192L1104 857 1024 805 968 740 929 656z"/>
          <path d="M1024 565L1045 472 1104 397 1192 355H1284L1372 397 1431 472 1452 564 1431 658 1372 732 1284 774H1191L1104 733 1045 657z"/>
        </g>
        <path d="M595 559v7h7" stroke="#5a6470"/>
        <path id="green" stroke="#1cc81c" stroke-width="2" shape-rendering="crispEdges"/>
        <path id="red" stroke="#f00a0a" stroke-width="1" shape-rendering="crispEdges"/>
        <g>
          <path d="M1641 911v-20" stroke="#1f8a2a" stroke-width="2"/><path d="M1641 885l3.500 9h-7z" fill="#1f8a2a"/>
          <path d="M1641 912h20" stroke="#8a3018" stroke-width="2"/><path d="M1668 911.500l-9-3.500v7z" fill="#8a3018"/>
          <path d="M1641 907l4 4.500-4 4-4-4z" fill="#14209a"/>
          <g font-family="Liberation Sans, sans-serif" font-size="10" fill="#111"><text x="1643" y="885">Y</text><text x="1670" y="912">X</text><text x="1643" y="912">Z</text></g>
        </g>
      </svg>
    </div>
    <div class="doctabs"><div class="doctab d-flex align-items-center">
      <svg class="me-2" width="16" height="16" viewBox="0 0 18 16"><path d="M1 1h9v4H5v2h3v3H5v5H1z" fill="#e8261c" stroke="#9c120a" stroke-width=".6"/><circle cx="11" cy="9" r="3.600" fill="none" stroke="#1d50a8" stroke-width="2.600"/><circle cx="11" cy="9" r="5.500" fill="none" stroke="#163a80" stroke-width="2" stroke-dasharray="2 2.300"/></svg>
      <a href="#" class="me-auto">Engine Tutorial : 1*</a>
      <button class="border-0 bg-transparent p-0 me-1" aria-label="Close document"><svg width="15" height="15" viewBox="0 0 15 15"><path d="M2.500 3l10 9M12.500 3l-10 9" stroke="#6a6a68" stroke-width="4.500"/></svg></button>
    </div></div>
  </section>
</main>

<footer class="statusbar d-flex align-items-center justify-content-end">183.68 x 107.86 mm</footer>

<div class="tip" role="tooltip">Finishes and closes the current line (C)</div>
<svg class="pointer" width="14" height="21" viewBox="0 0 14 21"><path d="M1.500 1.500v14.500l3.500-3.500 2.500 6.500 2.500-1-2.500-6h4.500z" fill="#fff" stroke="#111" stroke-width="1.300"/></svg>

<script>
// gasket outline shared by the real wire and its spline preview
const outline = [[595,566],[616,544],[626,523],[630,506],[626,487],[615,472],[594,455],[563,431],[546,412],[539,393],[541,376],[550,356],[568,335],[585,323],[598,321],[610,325],[625,338],[637,356],[655,381],[665,392],[675,398],[689,399],[709,391],[730,377],[764,355],[791,346],[810,344],[826,345],[855,354],[884,371],[909,384],[926,393],[946,397],[962,393],[976,380],[991,361],[1003,342],[1014,329],[1020,327],[1024,328],[1034,337],[1050,357],[1065,374],[1079,388],[1093,395],[1108,397],[1125,393],[1145,383],[1168,369],[1191,355],[1216,345],[1238,343],[1249,344],[1272,349],[1295,361],[1316,376],[1341,391],[1362,399],[1372,397],[1383,390],[1399,371],[1424,336],[1436,324],[1450,321],[1463,323],[1479,334],[1496,354],[1506,375],[1507,392],[1501,407],[1486,424],[1463,441],[1445,454],[1434,466],[1431,482],[1434,500],[1441,520],[1449,539],[1452,559],[1452,567],[1451,583],[1443,603],[1435,623],[1429,642],[1431,659],[1443,676],[1472,695],[1495,713],[1507,728],[1509,743],[1503,767],[1488,788],[1470,802],[1450,809],[1438,806],[1427,797],[1410,775],[1395,753],[1383,739],[1372,731],[1363,730],[1348,734],[1325,750],[1300,767],[1285,775],[1268,782],[1242,786],[1217,783],[1193,774],[1170,761],[1147,747],[1122,735],[1102,733],[1082,737],[1067,749],[1052,772],[1038,792],[1029,803],[1023,805],[1017,802],[1009,792],[985,760],[969,743],[953,736],[934,736],[912,742],[884,759],[850,777],[819,785],[805,786],[791,784],[764,776],[730,756],[700,737],[685,732],[675,733],[659,744],[637,771],[618,797],[603,805],[594,807],[584,804],[568,792]];
const greenEnd = [[553,774],[538,739],[535,720],[538,698],[548,682],[564,669],[587,661],[616,656]];
const redEnd = [[553,775],[544,758],[539,740],[539,722],[544,707],[560,688],[587,671],[616,657],[648,641],[773,583],[873,527],[926,492],[957,464],[976,438],[990,410],[994,385],[989,357],[975,329],[951,302],[926,280],[898,259],[855,231],[782,195],[746,179]];
function smooth(p){
  let d = 'M' + p[0];
  for (let i = 0; i < p.length - 1; i++){
    const a = p[i-1] || p[i], b = p[i], c = p[i+1], e = p[i+2] || c;
    d += `C${b[0]+(c[0]-a[0])/6} ${b[1]+(c[1]-a[1])/6} ${c[0]-(e[0]-b[0])/6} ${c[1]-(e[1]-b[1])/6} ${c}`;
  }
  return d;
}
document.getElementById('green').setAttribute('d', smooth(outline.concat(greenEnd)));
document.getElementById('red').setAttribute('d', smooth(outline.concat(redEnd)));
</script>
</body>
</html>
